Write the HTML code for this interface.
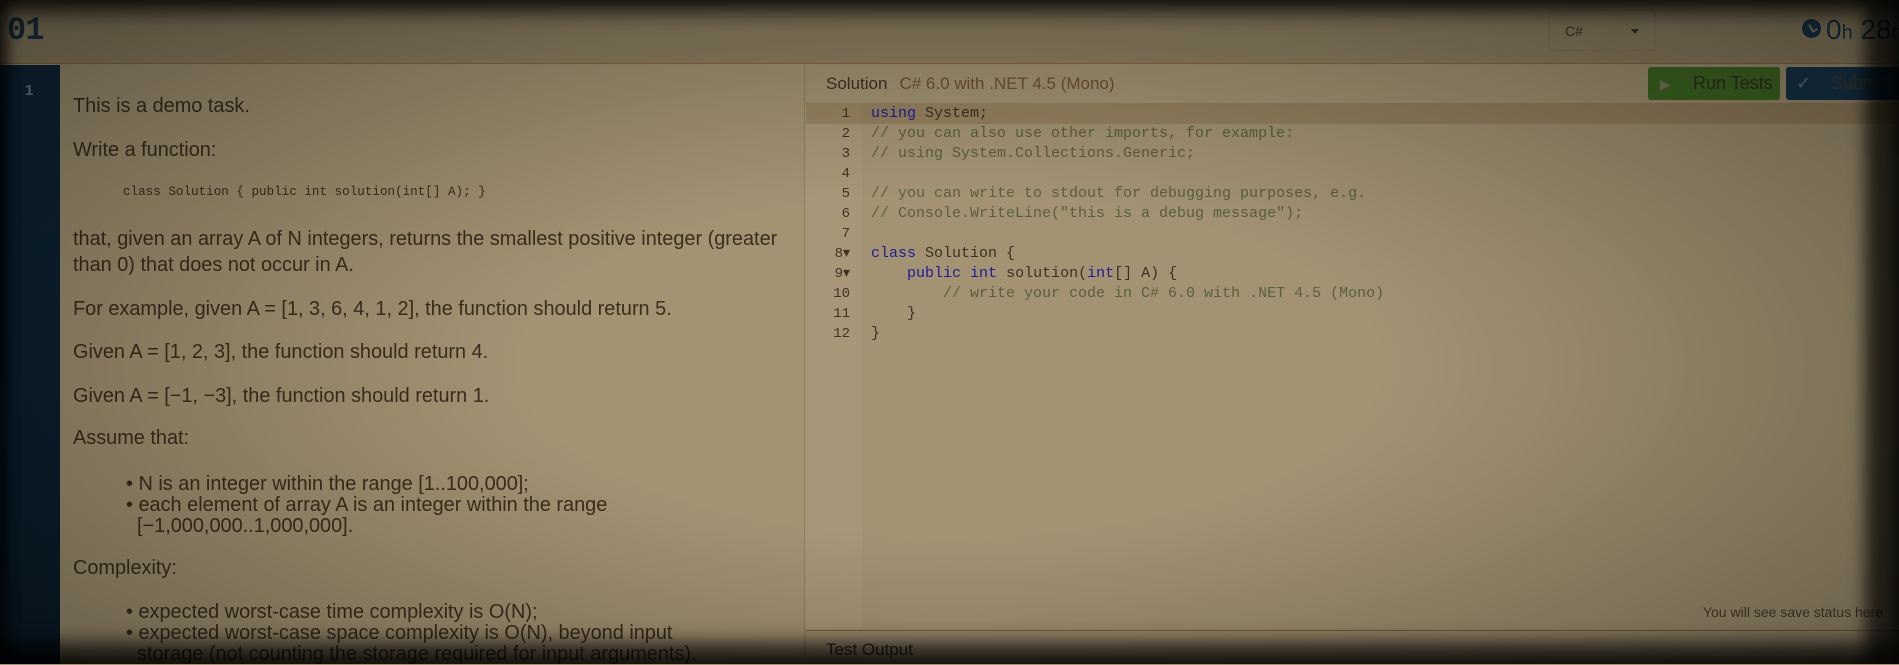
<!DOCTYPE html>
<html><head><meta charset="utf-8"><style>
*{margin:0;padding:0;box-sizing:border-box}
body{width:1899px;height:664px;overflow:hidden;position:relative;background:#a39373;font-family:"Liberation Sans",sans-serif;color:#3a2e1e}
.hdr{position:absolute;left:0;top:0;width:1899px;height:64px;border-bottom:1px solid #8a6a40;background:#8e8062}
.logo{position:absolute;left:7px;top:12px;font:bold 32px "Liberation Mono",monospace;color:#1a3448;letter-spacing:-1px}
.sel{position:absolute;left:1548px;top:10px;width:108px;height:41px;border:1px solid #84765a;border-radius:4px;font-size:14px;color:#3a3226;padding:12px 0 0 16px}
.sel:after{content:"";position:absolute;right:16px;top:18px;border:4px solid transparent;border-top:5px solid #3a3226}
.clock{position:absolute;left:1802px;top:19px;width:19px;height:19px;border-radius:50%;background:#18344a}
.clock:after{content:"";position:absolute;left:8px;top:4px;width:4px;height:7px;border-left:2px solid #8a7c5c;border-bottom:2px solid #8a7c5c;transform:rotate(-30deg)}
.time{position:absolute;left:1826px;top:14px;font-size:28px;color:#1a3448;white-space:nowrap}
.time small{font-size:20px}
.side{position:absolute;left:0;top:65px;width:60px;height:599px;background:linear-gradient(#0f2638,#0a1c29)}
.side b{position:absolute;left:25px;top:17px;font-size:15px;color:#6f7f8a}
.side i{position:absolute;left:54px;top:20px;border:6px solid transparent;border-right:6px solid #a39373}
.lt{position:absolute;left:73px;font-size:19.9px;line-height:22px;white-space:nowrap}
.b{left:126px}.b2{left:137px}
.mono{font:12.6px "Liberation Mono",monospace}
.div{position:absolute;left:804px;top:65px;width:1px;height:599px;background:#8f7f5c}
.sol{position:absolute;left:826px;top:74px;font-size:17px;color:#3a3226;white-space:nowrap}
.sol span{color:#6d5230;margin-left:12px}
.btn{position:absolute;top:67px;height:33px;border-radius:3px;font-size:18px;white-space:nowrap}
.btn span{position:absolute;top:6px}
.run{left:1648px;width:132px;background:#3f6a22;color:#2e3020}
.sub{left:1786px;width:120px;background:#17354a;color:#3a3e32}
.gut{position:absolute;left:806px;top:104px;width:56px;height:525px;background:rgba(255,240,210,.05)}
.act{position:absolute;left:806px;top:103px;width:1093px;height:21px;background:rgba(120,90,50,.3)}
.code{position:absolute;top:104px;font:15px/20px "Liberation Mono",monospace;white-space:pre}
.ln{left:806px;width:44px;text-align:right;color:#3f3424;font-size:14px}
.src{left:871px;color:#3a3024}
.k{color:#1c1c9c}.c{color:#59603c}
.stat{position:absolute;right:16px;top:604px;font-size:14px;color:#4a3c2c}
.hl{position:absolute;left:806px;top:630px;width:1093px;height:1px;background:#7a6236}
.to{position:absolute;left:826px;top:640px;font-size:17px;color:#2e2618}
.vig{position:absolute;left:0;top:0;width:1899px;height:664px;pointer-events:none;
background:radial-gradient(ellipse 75% 85% at 50% 55%,rgba(0,0,0,0) 30%,rgba(0,0,0,.45) 100%);
box-shadow:inset 0 14px 18px rgba(0,0,0,.6),inset 0 -22px 18px rgba(0,0,0,.7),inset -34px 0 16px rgba(0,0,0,.7),inset 10px 0 10px rgba(0,0,0,.3)}
</style></head><body>
<div class="hdr"></div>
<div class="logo">01</div>
<div class="sel">C#</div>
<div class="clock"></div>
<div class="time">0<small>h</small> 28<small>m</small></div>
<div class="side"><b>1</b><i></i></div>
<div class="lt" style="top:95px">This is a demo task.</div>
<div class="lt" style="top:139px">Write a function:</div>
<div class="lt mono" style="left:123px;top:185px">class Solution { public int solution(int[] A); }</div>
<div class="lt" style="top:228px">that, given an array A of N integers, returns the smallest positive integer (greater</div>
<div class="lt" style="top:254px">than 0) that does not occur in A.</div>
<div class="lt" style="top:298px">For example, given A = [1, 3, 6, 4, 1, 2], the function should return 5.</div>
<div class="lt" style="top:341px">Given A = [1, 2, 3], the function should return 4.</div>
<div class="lt" style="top:385px">Given A = [−1, −3], the function should return 1.</div>
<div class="lt" style="top:427px">Assume that:</div>
<div class="lt b" style="top:473px">• N is an integer within the range [1..100,000];</div>
<div class="lt b" style="top:494px">• each element of array A is an integer within the range</div>
<div class="lt b2" style="top:515px">[−1,000,000..1,000,000].</div>
<div class="lt" style="top:557px">Complexity:</div>
<div class="lt b" style="top:601px">• expected worst-case time complexity is O(N);</div>
<div class="lt b" style="top:622px">• expected worst-case space complexity is O(N), beyond input</div>
<div class="lt b2" style="top:643px">storage (not counting the storage required for input arguments).</div>
<div class="div"></div>
<div class="sol">Solution<span>C# 6.0 with .NET 4.5 (Mono)</span></div>
<div class="btn run"><span style="left:12px;font-size:14px;top:9px;color:#7a7a5a">▶</span><span style="left:45px">Run Tests</span></div>
<div class="btn sub"><span style="left:10px;color:#6a7070">✓</span><span style="left:45px">Submit</span></div>
<div class="gut"></div>
<div class="act"></div>
<div class="code ln">1
2
3
4
5
6
7
8▾
9▾
10
11
12</div>
<div class="code src"><span class="k">using</span> System;
<span class="c">// you can also use other imports, for example:</span>
<span class="c">// using System.Collections.Generic;</span>

<span class="c">// you can write to stdout for debugging purposes, e.g.</span>
<span class="c">// Console.WriteLine("this is a debug message");</span>

<span class="k">class</span> Solution {
    <span class="k">public</span> <span class="k">int</span> solution(<span class="k">int</span>[] A) {
        <span class="c">// write your code in C# 6.0 with .NET 4.5 (Mono)</span>
    }
}</div>
<div class="stat">You will see save status here</div>
<div class="hl"></div>
<div class="to">Test Output</div>
<div class="vig"></div>
</body></html>
